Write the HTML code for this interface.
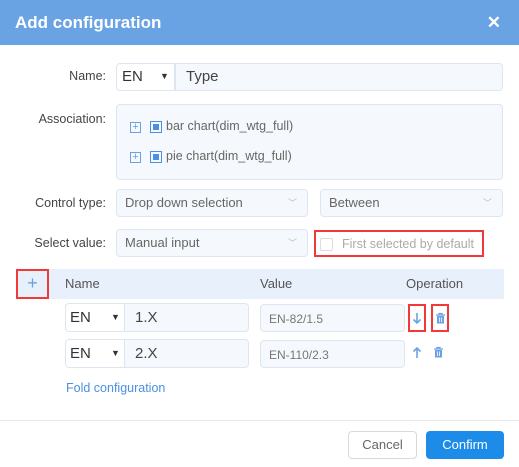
<!DOCTYPE html><html><head><style>
*{box-sizing:border-box;margin:0;padding:0}
body{width:519px;height:467px;background:#fff;font-family:"Liberation Sans",sans-serif;position:relative;overflow:hidden;font-size:13px;color:#555}
.a{position:absolute}
.hd{left:0;top:0;width:519px;height:45px;background:#6aa3e3;color:#fff;font-size:17px;font-weight:bold;line-height:45px;padding-left:15px}
.lbl{text-align:right;width:106px;left:0;font-size:12.5px;color:#444}
.box{border:1px solid #dde6f0;background:#f5f8fc;border-radius:4px}
.t{line-height:26px;padding-left:8px;color:#666;font-size:13px}
.chev{position:absolute;right:10px;top:0;color:#bbb;font-size:9px}
.red{border:2px solid #f03a3a}
</style></head><body>
<div class="a hd">Add configuration<span style="position:absolute;right:18px;top:0;font-size:17px">✕</span></div>
<div class="a lbl" style="top:69px">Name:</div>
<div class="a box" style="left:116px;top:63px;width:59px;height:28px;background:#fff;border-radius:4px 0 0 4px"><span style="position:absolute;left:5px;top:4px;font-size:15px;color:#333">EN</span><span style="position:absolute;left:43px;top:7px;font-size:9px;color:#333">▼</span></div>
<div class="a box" style="left:175px;top:63px;width:328px;height:28px;border-radius:0 4px 4px 0"><span style="position:absolute;left:10px;top:4px;font-size:15px;color:#444">Type</span></div>
<div class="a lbl" style="top:112px">Association:</div>
<div class="a box" style="left:116px;top:104px;width:387px;height:76px">
<div class="a" style="left:13px;top:17px;width:11px;height:11px;border:1px solid #6aa3e3;color:#6aa3e3;font-size:11px;line-height:9px;text-align:center">+</div>
<div class="a" style="left:33px;top:16px;width:12px;height:12px;border:1px solid #4a90e2;padding:2px"><div style="width:6px;height:6px;background:#4a90e2"></div></div>
<div class="a" style="left:49px;top:14px;font-size:12.5px;color:#666">bar chart(dim_wtg_full)</div>
<div class="a" style="left:13px;top:47px;width:11px;height:11px;border:1px solid #6aa3e3;color:#6aa3e3;font-size:11px;line-height:9px;text-align:center">+</div>
<div class="a" style="left:33px;top:46px;width:12px;height:12px;border:1px solid #4a90e2;padding:2px"><div style="width:6px;height:6px;background:#4a90e2"></div></div>
<div class="a" style="left:49px;top:44px;font-size:12.5px;color:#666">pie chart(dim_wtg_full)</div>
</div>
<div class="a lbl" style="top:196px">Control type:</div>
<div class="a box t" style="left:116px;top:189px;width:192px;height:28px">Drop down selection<span class="chev">﹀</span></div>
<div class="a box t" style="left:320px;top:189px;width:183px;height:28px">Between<span class="chev">﹀</span></div>
<div class="a lbl" style="top:236px">Select value:</div>
<div class="a box t" style="left:116px;top:229px;width:192px;height:28px">Manual input<span class="chev">﹀</span></div>
<div class="a red" style="left:314px;top:230px;width:170px;height:27px"><div class="a" style="left:4px;top:6px;width:13px;height:13px;border:1px solid #ddd;border-radius:2px"></div><span class="a" style="left:26px;top:5px;color:#aaa;font-size:12.5px">First selected by default</span></div>
<div class="a" style="left:16px;top:269px;width:488px;height:30px;background:#e8f1fb"></div>
<div class="a red" style="left:16px;top:269px;width:33px;height:30px;color:#6aa3e3;font-size:18px;text-align:center;line-height:24px">+</div>
<div class="a" style="left:65px;top:276px;font-size:13px;color:#555">Name</div>
<div class="a" style="left:260px;top:276px;font-size:13px;color:#555">Value</div>
<div class="a" style="left:406px;top:276px;font-size:13px;color:#555">Operation</div>
<div class="a box" style="left:65px;top:303px;width:60px;height:29px;background:#fff;border-radius:4px 0 0 4px"><span style="position:absolute;left:4px;top:5px;font-size:15px;color:#333">EN</span><span style="position:absolute;left:45px;top:8px;font-size:9px;color:#333">▼</span></div>
<div class="a box" style="left:124px;top:303px;width:125px;height:29px;border-radius:0 4px 4px 0"><span style="position:absolute;left:10px;top:5px;font-size:15px;color:#444">1.X</span></div>
<div class="a box" style="left:260px;top:304px;width:145px;height:28px"><span style="position:absolute;left:8px;top:7px;font-size:12px;color:#777">EN-82/1.5</span></div>
<div class="a box" style="left:65px;top:339px;width:60px;height:29px;background:#fff;border-radius:4px 0 0 4px"><span style="position:absolute;left:4px;top:5px;font-size:15px;color:#333">EN</span><span style="position:absolute;left:45px;top:8px;font-size:9px;color:#333">▼</span></div>
<div class="a box" style="left:124px;top:339px;width:125px;height:29px;border-radius:0 4px 4px 0"><span style="position:absolute;left:10px;top:5px;font-size:15px;color:#444">2.X</span></div>
<div class="a box" style="left:260px;top:340px;width:145px;height:28px"><span style="position:absolute;left:8px;top:7px;font-size:12px;color:#777">EN-110/2.3</span></div>
<div class="a red" style="left:408px;top:304px;width:18px;height:28px"><svg class="a" style="left:2px;top:6px" width="10" height="13"><path d="M5 1V11M1.5 7.5L5 11L8.5 7.5" stroke="#6aa3e3" stroke-width="1.6" fill="none"/></svg></div>
<div class="a red" style="left:431px;top:304px;width:18px;height:28px"><svg class="a" style="left:2px;top:6px" width="11" height="12"><path d="M1 3H10M4 3V1.5H7V3" stroke="#6aa3e3" stroke-width="1.3" fill="none"/><rect x="2" y="4" width="7" height="7.5" fill="#6aa3e3"/><path d="M4.5 5.5V10M6.5 5.5V10" stroke="#fff" stroke-width="0.8"/></svg></div>
<svg class="a" style="left:412px;top:346px" width="10" height="13"><path d="M5 12V2M1.5 5.5L5 2L8.5 5.5" stroke="#6aa3e3" stroke-width="1.6" fill="none"/></svg>
<svg class="a" style="left:433px;top:346px" width="11" height="12"><path d="M1 3H10M4 3V1.5H7V3" stroke="#6aa3e3" stroke-width="1.3" fill="none"/><rect x="2" y="4" width="7" height="7.5" fill="#6aa3e3"/><path d="M4.5 5.5V10M6.5 5.5V10" stroke="#fff" stroke-width="0.8"/></svg>
<div class="a" style="left:66px;top:381px;color:#4a90e2;font-size:12.5px">Fold configuration</div>
<div class="a" style="left:0;top:420px;width:519px;height:1px;background:#e8e8e8"></div>
<div class="a" style="left:348px;top:431px;width:69px;height:28px;border:1px solid #d9d9d9;border-radius:4px;text-align:center;line-height:26px;color:#666">Cancel</div>
<div class="a" style="left:426px;top:431px;width:78px;height:28px;background:#1d8ce8;border-radius:4px;text-align:center;line-height:28px;color:#fff">Confirm</div>
</body></html>
